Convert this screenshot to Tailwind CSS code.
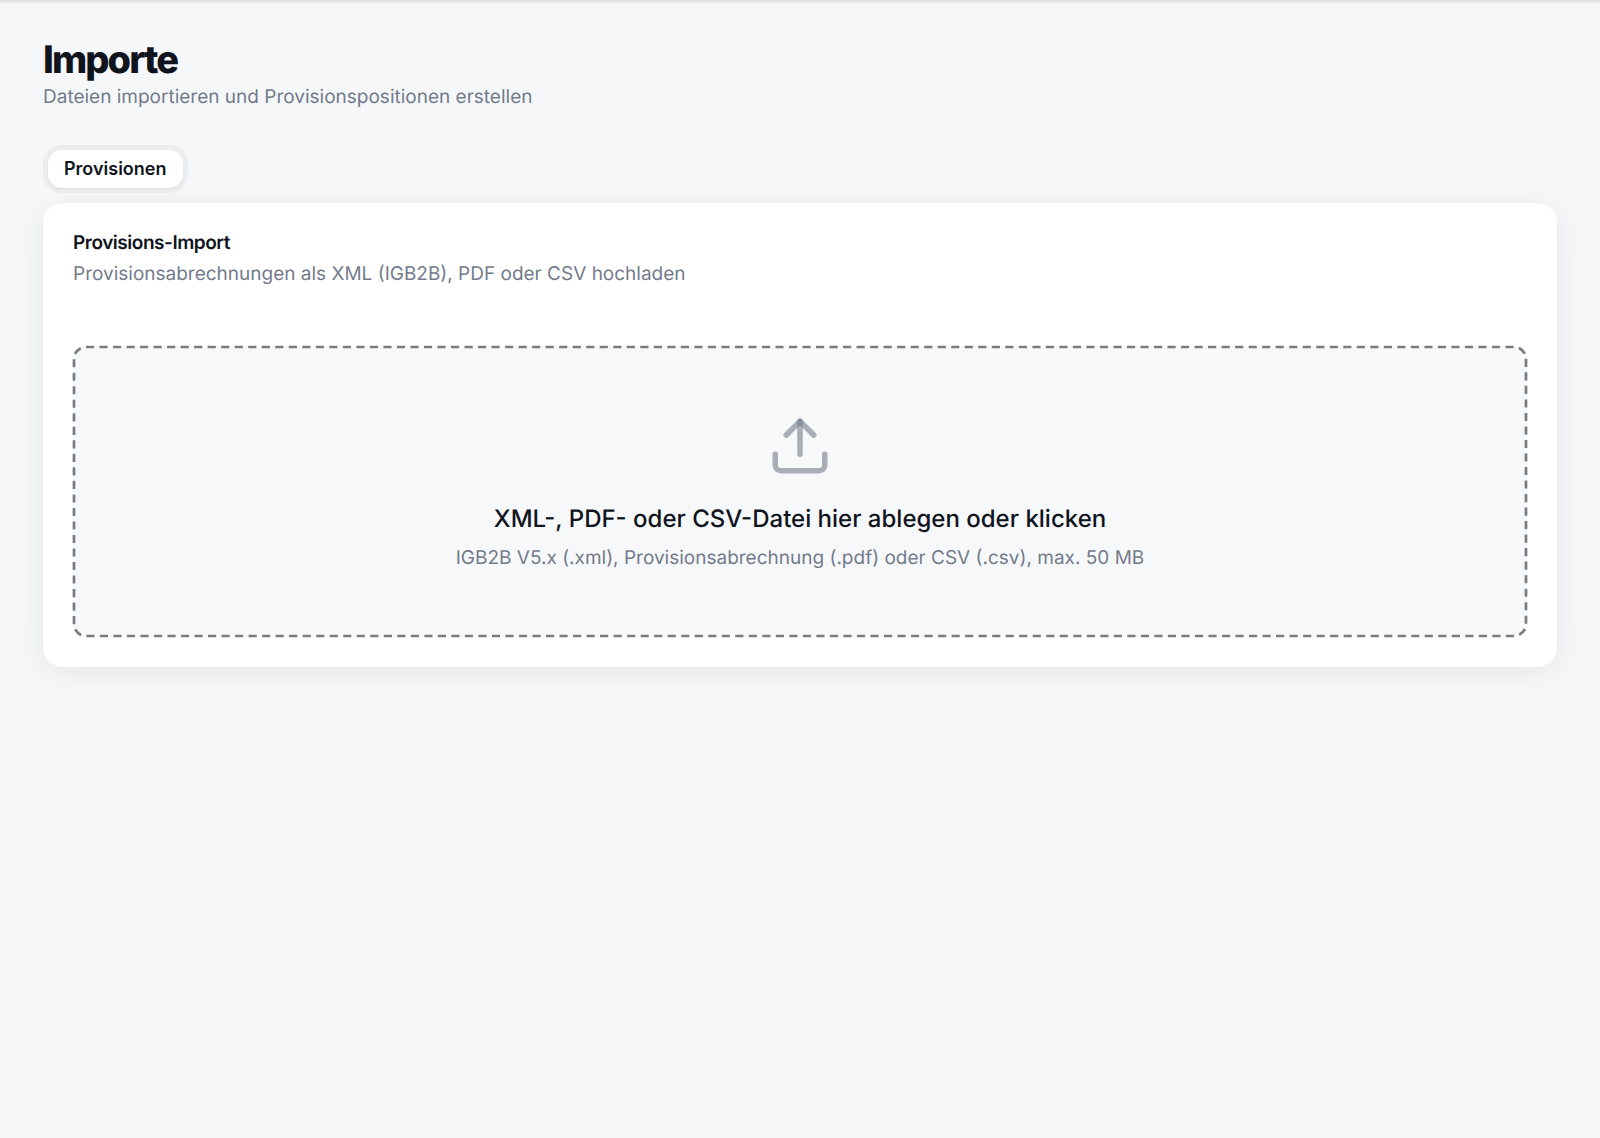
<!DOCTYPE html>
<html lang="de">
<head>
    <meta charset="UTF-8">
    <meta name="viewport" content="width=device-width, initial-scale=1.0">
    <title>Importe</title>
    <script src="https://cdn.jsdelivr.net/npm/@tailwindcss/browser@4"></script>
</head>
<body class="bg-[#f5f7f9] text-[#10141c] font-['Inter',sans-serif] [text-rendering:geometricPrecision] min-h-screen">
    <div class="h-1 bg-linear-to-b from-[#d9dbde] to-[#f5f7f9]"></div>

    <main class="px-[43px] pt-8 pb-10">
        <header>
            <h1 class="text-[38px] leading-[48px] font-extrabold tracking-tighter">Importe</h1>
            <p class="text-[19px] leading-[26px] text-[#737b8b]">Dateien importieren und Provisionspositionen erstellen</p>
        </header>

        <div role="tablist" class="mt-[35px] w-fit rounded-[18px] bg-[#ebedef] p-[5px]">
            <button type="button" role="tab" aria-selected="true" class="block h-[38px] rounded-[14px] bg-white px-4 text-[18px] leading-6 font-semibold shadow-sm shadow-black/5 cursor-pointer">Provisionen</button>
        </div>

        <section class="mt-[10px] rounded-[20px] bg-white p-[30px] shadow-[0_5px_30px_rgba(0,0,0,0.07)]">
            <h2 class="text-[19px] leading-5 font-semibold tracking-tight">Provisions-Import</h2>
            <p class="mt-[7px] text-[19px] leading-7 text-[#737b8b]">Provisionsabrechnungen als XML (IGB2B), PDF oder CSV hochladen</p>

            <label for="file" class="relative mt-[58px] flex flex-col items-center rounded-[14px] bg-[#f7f8fa] px-8 pt-[67px] pb-[65px] text-center cursor-pointer">
                <!-- dashed frame -->
                <svg class="absolute inset-0 h-full w-full p-px overflow-visible" aria-hidden="true">
                    <rect width="100%" height="100%" rx="12" fill="none" stroke="#7b7b7b" stroke-width="2.7" pathLength="1280" stroke-dasharray="3 2"/>
                </svg>
                <svg class="size-[66px] text-[#737b8b]/60" viewBox="0 0 24 24" fill="none" stroke="currentColor" stroke-width="2" stroke-linecap="round" stroke-linejoin="round" aria-hidden="true">
                    <path d="M21 15v4a2 2 0 0 1-2 2H5a2 2 0 0 1-2-2v-4"/>
                    <path d="m17 8-5-5-5 5"/>
                    <path d="M12 3v12"/>
                </svg>
                <span class="mt-[22px] text-[24px] leading-9 font-medium">XML-, PDF- oder CSV-Datei hier ablegen oder klicken</span>
                <span class="mt-[7px] text-[19px] leading-7 text-[#737b8b]">IGB2B V5.x (.xml), Provisionsabrechnung (.pdf) oder CSV (.csv), max. 50 MB</span>
                <input id="file" type="file" accept=".xml,.pdf,.csv" class="sr-only">
            </label>
        </section>
    </main>
</body>
</html>
